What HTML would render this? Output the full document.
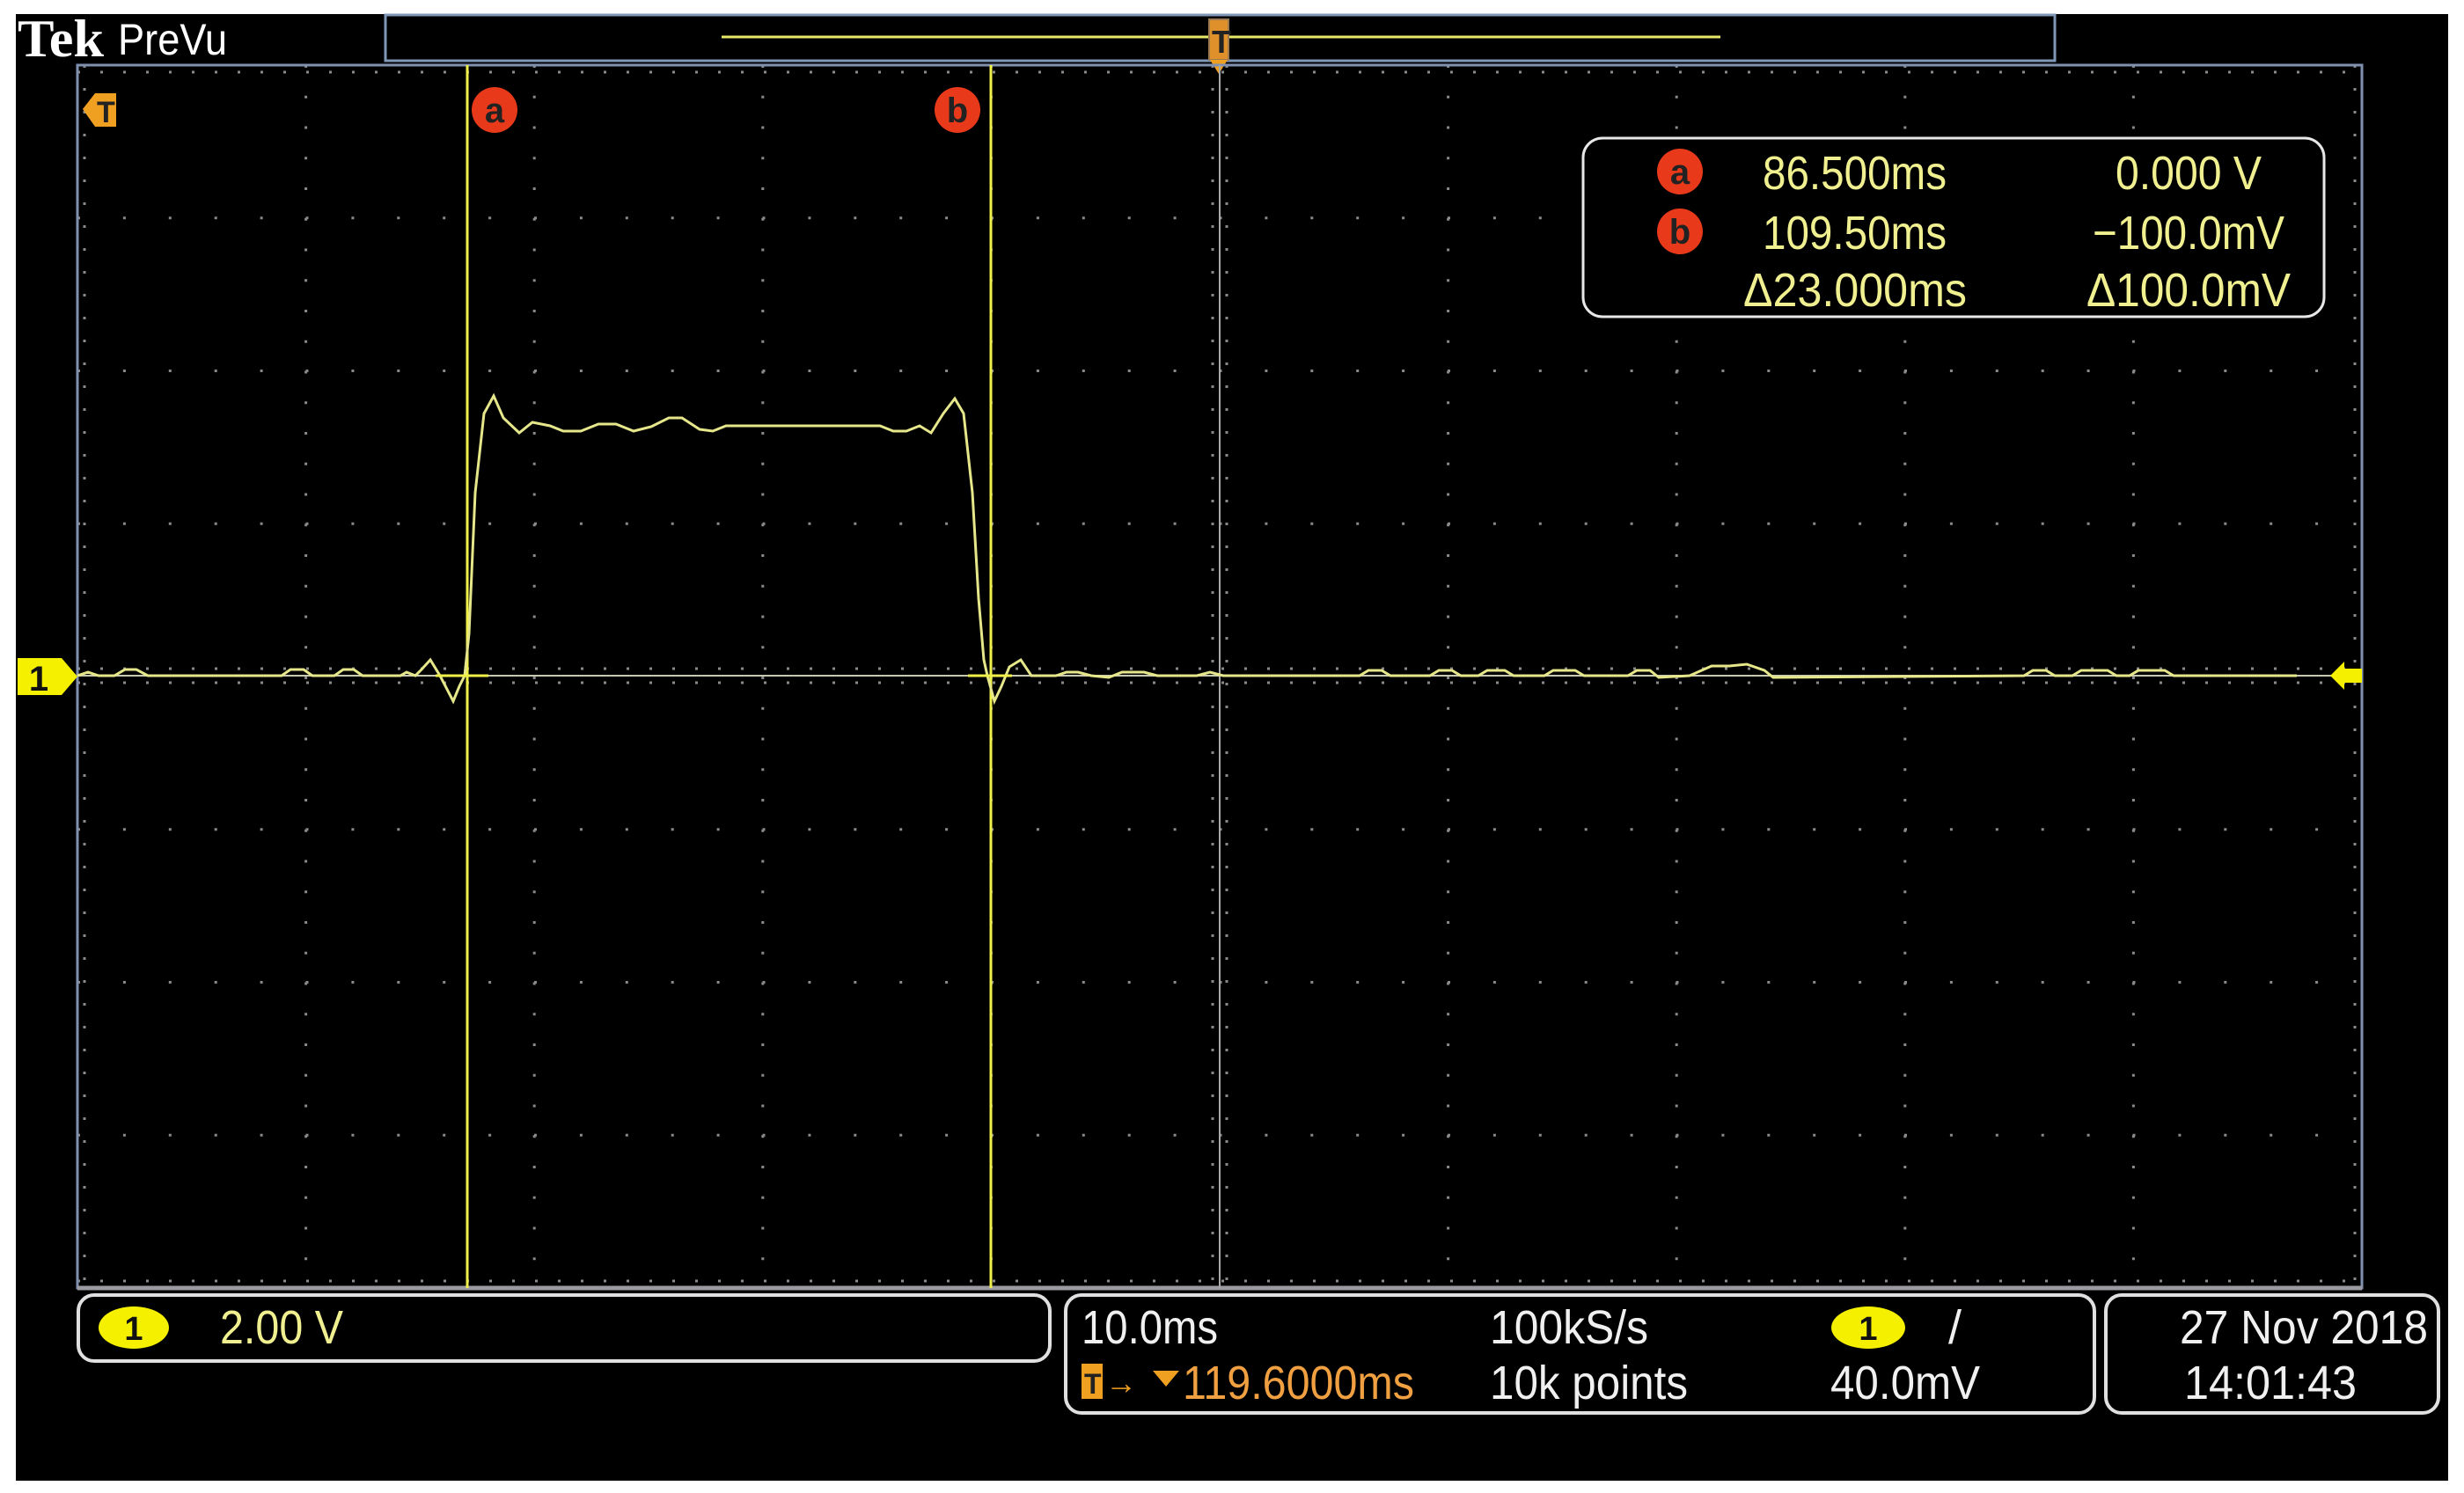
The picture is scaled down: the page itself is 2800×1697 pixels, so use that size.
<!DOCTYPE html>
<html><head><meta charset="utf-8"><style>
html,body{margin:0;padding:0;background:#fff;}
svg{display:block}
text{font-family:"Liberation Sans Narrow","Liberation Sans",sans-serif;}
</style></head><body>
<svg width="2800" height="1697" viewBox="0 0 2800 1697" xmlns="http://www.w3.org/2000/svg">
<rect x="18" y="16" width="2764" height="1667" fill="#000"/>
<text x="20" y="64" fill="#fff" font-weight="bold" font-size="60" style="font-family:'Liberation Serif',serif" textLength="98" lengthAdjust="spacingAndGlyphs">Tek</text>
<text x="134" y="62" fill="#fff" font-size="50" textLength="124" lengthAdjust="spacingAndGlyphs">PreVu</text>
<rect x="438" y="17" width="1897" height="52" fill="#000" stroke="#7f98b8" stroke-width="3"/>
<line x1="820" y1="42" x2="1955" y2="42" stroke="#e8e86a" stroke-width="3"/>
<rect x="1374" y="22" width="22" height="46" fill="#e0902a" stroke="#9a7a50" stroke-width="2"/>
<text x="1377" y="60" fill="#222" font-size="36" font-weight="bold">T</text>
<polygon points="1375,68 1395,68 1385,84" fill="#f0a020"/>
<g stroke="#8a8a8a" stroke-width="3" stroke-dasharray="3 31.75">
<line x1="347.6" y1="74" x2="347.6" y2="1464"/>
<line x1="607.2" y1="74" x2="607.2" y2="1464"/>
<line x1="866.8" y1="74" x2="866.8" y2="1464"/>
<line x1="1126.4" y1="74" x2="1126.4" y2="1464"/>
<line x1="1645.6" y1="74" x2="1645.6" y2="1464"/>
<line x1="1905.2" y1="74" x2="1905.2" y2="1464"/>
<line x1="2164.8" y1="74" x2="2164.8" y2="1464"/>
<line x1="2424.4" y1="74" x2="2424.4" y2="1464"/>
</g>
<g stroke="#8a8a8a" stroke-width="3" stroke-dasharray="3 48.9">
<line x1="88" y1="247.75" x2="2684" y2="247.75"/>
<line x1="88" y1="421.5" x2="2684" y2="421.5"/>
<line x1="88" y1="595.25" x2="2684" y2="595.25"/>
<line x1="88" y1="942.75" x2="2684" y2="942.75"/>
<line x1="88" y1="1116.5" x2="2684" y2="1116.5"/>
<line x1="88" y1="1290.25" x2="2684" y2="1290.25"/>
</g>
<g stroke="#8a8a8a" stroke-width="3" stroke-dasharray="3 23">
<line x1="88" y1="760" x2="2684" y2="760"/>
<line x1="88" y1="776" x2="2684" y2="776"/>
<line x1="1378" y1="74" x2="1378" y2="1464"/>
<line x1="1394" y1="74" x2="1394" y2="1464"/>
<line x1="88" y1="82" x2="2684" y2="82"/>
<line x1="88" y1="1456" x2="2684" y2="1456"/>
<line x1="96" y1="74" x2="96" y2="1464"/>
<line x1="2676" y1="74" x2="2676" y2="1464"/>
</g>
<rect x="88" y="74" width="2596" height="1390" fill="none" stroke="#8090b0" stroke-width="3"/>
<line x1="88" y1="1464" x2="2684" y2="1464" stroke="#9a9aa0" stroke-width="5"/>
<line x1="1386" y1="74" x2="1386" y2="1464" stroke="#a8a8a8" stroke-width="2"/>
<line x1="88" y1="768" x2="2684" y2="768" stroke="#c8c8b0" stroke-width="2"/>
<line x1="531" y1="74" x2="531" y2="1464" stroke="#f0f04a" stroke-width="3"/>
<line x1="1126" y1="74" x2="1126" y2="1464" stroke="#f0f04a" stroke-width="3"/>
<path d="M88,768 L100,764 L112,768 L130,768 L142,761 L155,761 L168,768 L200,768 L320,768 L330,761 L345,761 L355,768 L380,768 L390,761 L402,761 L412,768 L455,768 L462,764 L472,768 L478,762 L489,750 L500,768 L515,797 L522,780 L528,768 L533,720 L540,560 L550,470 L561,450 L572,475 L590,492 L605,480 L625,484 L640,490 L660,490 L680,482 L700,482 L720,490 L740,485 L760,475 L775,475 L795,488 L810,490 L825,484 L1000,484 L1015,490 L1030,490 L1045,484 L1058,492 L1072,470 L1085,453 L1095,470 L1105,560 L1112,680 L1118,750 L1122,768 L1130,797 L1138,780 L1147,758 L1160,750 L1172,768 L1200,768 L1212,764 L1225,764 L1240,768 L1260,770 L1275,764 L1300,764 L1315,768 L1360,768 L1375,764 L1390,768 L1545,768 L1555,762 L1570,762 L1580,768 L1625,768 L1635,762 L1650,762 L1660,768 L1680,768 L1690,762 L1710,762 L1720,768 L1755,768 L1765,762 L1790,762 L1800,768 L1850,768 L1860,762 L1875,762 L1885,770 L1920,768 L1945,757 L1965,757 L1985,755 L2005,762 L2015,770 L2300,768 L2310,762 L2325,762 L2335,768 L2355,768 L2365,762 L2395,762 L2405,768 L2420,768 L2430,762 L2460,762 L2470,768 L2610,768" fill="none" stroke="#e6e68a" stroke-width="3"/>
<line x1="495" y1="768" x2="555" y2="768" stroke="#f0f04a" stroke-width="3"/>
<line x1="1100" y1="768" x2="1150" y2="768" stroke="#f0f04a" stroke-width="3"/>
<polygon points="94,124 108,106 132,106 132,144 108,144" fill="#f0a020"/>
<text x="110" y="139" fill="#222" font-size="34" font-weight="bold">T</text>
<circle cx="562" cy="125" r="26" fill="#e83a1a"/>
<text x="562" y="139" fill="#222" font-size="40" text-anchor="middle" font-weight="bold">a</text>
<circle cx="1088" cy="125" r="26" fill="#e83a1a"/>
<text x="1088" y="139" fill="#222" font-size="40" text-anchor="middle" font-weight="bold">b</text>
<polygon points="20,748 70,748 88,769 70,790 20,790" fill="#f4f000"/>
<text x="44" y="785" fill="#111" font-size="40" text-anchor="middle" font-weight="bold">1</text>
<polygon points="2648,768 2664,752 2664,760 2684,760 2684,776 2664,776 2664,784" fill="#f4f000"/>
<rect x="1799" y="157" width="842" height="203" rx="22" fill="#000" stroke="#e8e8e8" stroke-width="3"/>
<circle cx="1909" cy="195" r="26" fill="#e83a1a"/>
<text x="1909" y="209" fill="#222" font-size="40" text-anchor="middle" font-weight="bold">a</text>
<circle cx="1909" cy="263" r="26" fill="#e83a1a"/>
<text x="1909" y="277" fill="#222" font-size="40" text-anchor="middle" font-weight="bold">b</text>
<g fill="#f0f090" font-size="54">
<text x="2003" y="215" textLength="209" lengthAdjust="spacingAndGlyphs">86.500ms</text>
<text x="2404" y="215" textLength="166" lengthAdjust="spacingAndGlyphs">0.000 V</text>
<text x="2003" y="283" textLength="209" lengthAdjust="spacingAndGlyphs">109.50ms</text>
<text x="2378" y="283" textLength="218" lengthAdjust="spacingAndGlyphs">−100.0mV</text>
<text x="1981" y="348" textLength="254" lengthAdjust="spacingAndGlyphs">Δ23.000ms</text>
<text x="2371" y="348" textLength="232" lengthAdjust="spacingAndGlyphs">Δ100.0mV</text>
</g>
<g fill="none" stroke="#e0e0e0" stroke-width="4">
<rect x="89" y="1472" width="1104" height="75" rx="18"/>
<rect x="1211" y="1472" width="1169" height="134" rx="18"/>
<rect x="2393" y="1472" width="378" height="134" rx="18"/>
</g>
<ellipse cx="152" cy="1509" rx="40" ry="24" fill="#f4f000"/>
<text x="152" y="1523" fill="#111" font-size="38" text-anchor="middle" font-weight="bold">1</text>
<text x="250" y="1527" fill="#f0f090" font-size="54" textLength="140" lengthAdjust="spacingAndGlyphs">2.00 V</text>
<g fill="#f0f0f0" font-size="54">
<text x="1229" y="1527" textLength="155" lengthAdjust="spacingAndGlyphs">10.0ms</text>
<text x="1693" y="1527" textLength="180" lengthAdjust="spacingAndGlyphs">100kS/s</text>
<text x="2214" y="1527">/</text>
<text x="1693" y="1590" textLength="225" lengthAdjust="spacingAndGlyphs">10k points</text>
<text x="2080" y="1590" textLength="170" lengthAdjust="spacingAndGlyphs">40.0mV</text>
<text x="2477" y="1527" textLength="282" lengthAdjust="spacingAndGlyphs">27 Nov 2018</text>
<text x="2482" y="1590" textLength="196" lengthAdjust="spacingAndGlyphs">14:01:43</text>
</g>
<ellipse cx="2123" cy="1509" rx="42" ry="24" fill="#f4f000"/>
<text x="2123" y="1523" fill="#111" font-size="38" text-anchor="middle" font-weight="bold">1</text>
<rect x="1229" y="1550" width="24" height="40" fill="#f0a020"/>
<text x="1232" y="1584" fill="#222" font-size="32" font-weight="bold">T</text>
<text x="1256" y="1584" fill="#f0a020" font-size="36">→</text>
<polygon points="1310,1558 1340,1558 1325,1576" fill="#f0a020"/>
<text x="1344" y="1590" fill="#f0a040" font-size="54" textLength="263" lengthAdjust="spacingAndGlyphs">119.6000ms</text>
</svg>
</body></html>
